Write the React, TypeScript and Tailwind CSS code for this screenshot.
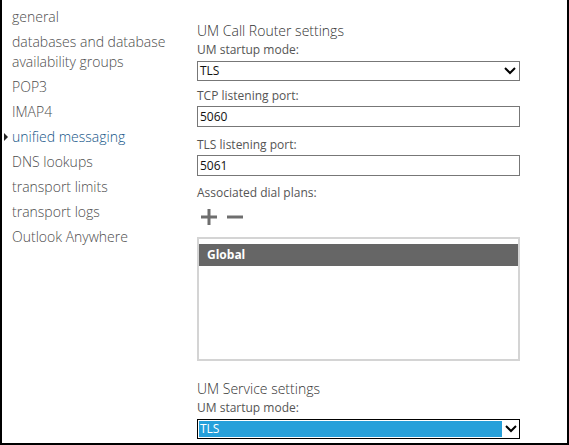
import React from 'react';

const navItems = [
  'general',
  'databases and database availability groups',
  'POP3',
  'IMAP4',
  'unified messaging',
  'DNS lookups',
  'transport limits',
  'transport logs',
  'Outlook Anywhere',
];

const Chevron = () => (
  <svg width="12" height="8" viewBox="0 0 12 8" className="shrink-0">
    <polyline points="1,1 6,6 11,1" fill="none" stroke="#000" strokeWidth="2" />
  </svg>
);

const Label = ({ children, className = '' }: { children: React.ReactNode; className?: string }) => (
  <div className={`text-[12px] leading-[16px] text-[#555] ${className}`}>{children}</div>
);

export default function App() {
  return (
    <div
      className="flex h-[445px] w-[569px] border-b-2 border-l-2 border-r-2 border-black bg-white"
      style={{ fontFamily: '"Open Sans", "Noto Sans", sans-serif' }}
    >
      {/* left navigation */}
      <nav className="w-[195px] shrink-0 pl-[10px] pr-2 pt-[7px]">
        <ul className="flex flex-col gap-[5px]">
          {navItems.map((item) => {
            const active = item === 'unified messaging';
            return (
              <li
                key={item}
                className={`relative w-[165px] text-[14px] font-light leading-[20px] ${
                  active ? 'text-[#145587]' : 'text-[#4d4d4d]'
                }`}
              >
                {active && (
                  <span className="absolute left-[-8px] top-[6px] h-0 w-0 border-y-[4px] border-l-[4px] border-y-transparent border-l-[#222]" />
                )}
                {item}
              </li>
            );
          })}
        </ul>
      </nav>

      {/* settings pane */}
      <main className="w-[323px] pt-[20px]">
        <h2 className="text-[14px] font-light leading-[22px] text-[#333]">UM Call Router settings</h2>
        <Label>UM startup mode:</Label>
        <div className="mt-[3px] flex h-[20px] items-center justify-between border border-[#777] pl-[2px] pr-[3px]">
          <span className="text-[12px] text-[#111]">TLS</span>
          <Chevron />
        </div>

        <Label className="mt-[7px]">TCP listening port:</Label>
        <div className="mt-[2px] flex h-[21px] items-center border border-[#777] pl-[2px] text-[12px] text-[#111]">
          5060
        </div>

        <Label className="mt-[10px]">TLS listening port:</Label>
        <div className="mt-[2px] flex h-[21px] items-center border border-[#777] pl-[2px] text-[12px] text-[#111]">
          5061
        </div>

        <Label className="mt-[9px]">Associated dial plans:</Label>
        <div className="mt-[8px] flex items-center gap-[10px] pl-[4px]">
          <svg width="16" height="16" viewBox="0 0 16 16">
            <path d="M8 0v16M0 8h16" stroke="#6e6e6e" strokeWidth="3" />
          </svg>
          <svg width="16" height="16" viewBox="0 0 16 16">
            <path d="M0 8h16" stroke="#6e6e6e" strokeWidth="3" />
          </svg>
        </div>

        <div className="mt-[12px] h-[124px] border-2 border-[#d4d4d4] pt-[5px]">
          <div className="flex h-[22px] items-center bg-[#666] pl-[8px] text-[12px] font-bold text-white">Global</div>
        </div>

        <h2 className="mt-[17px] text-[14px] font-light leading-[22px] text-[#333]">UM Service settings</h2>
        <Label>UM startup mode:</Label>
        <div className="mt-[3px] flex h-[20px] items-stretch border border-black">
          <div className="m-[1px] flex flex-1 items-center bg-[#26a0da] pl-[1px] text-[12px] text-white">TLS</div>
          <div className="flex w-[16px] items-center justify-center">
            <Chevron />
          </div>
        </div>
      </main>
    </div>
  );
}
